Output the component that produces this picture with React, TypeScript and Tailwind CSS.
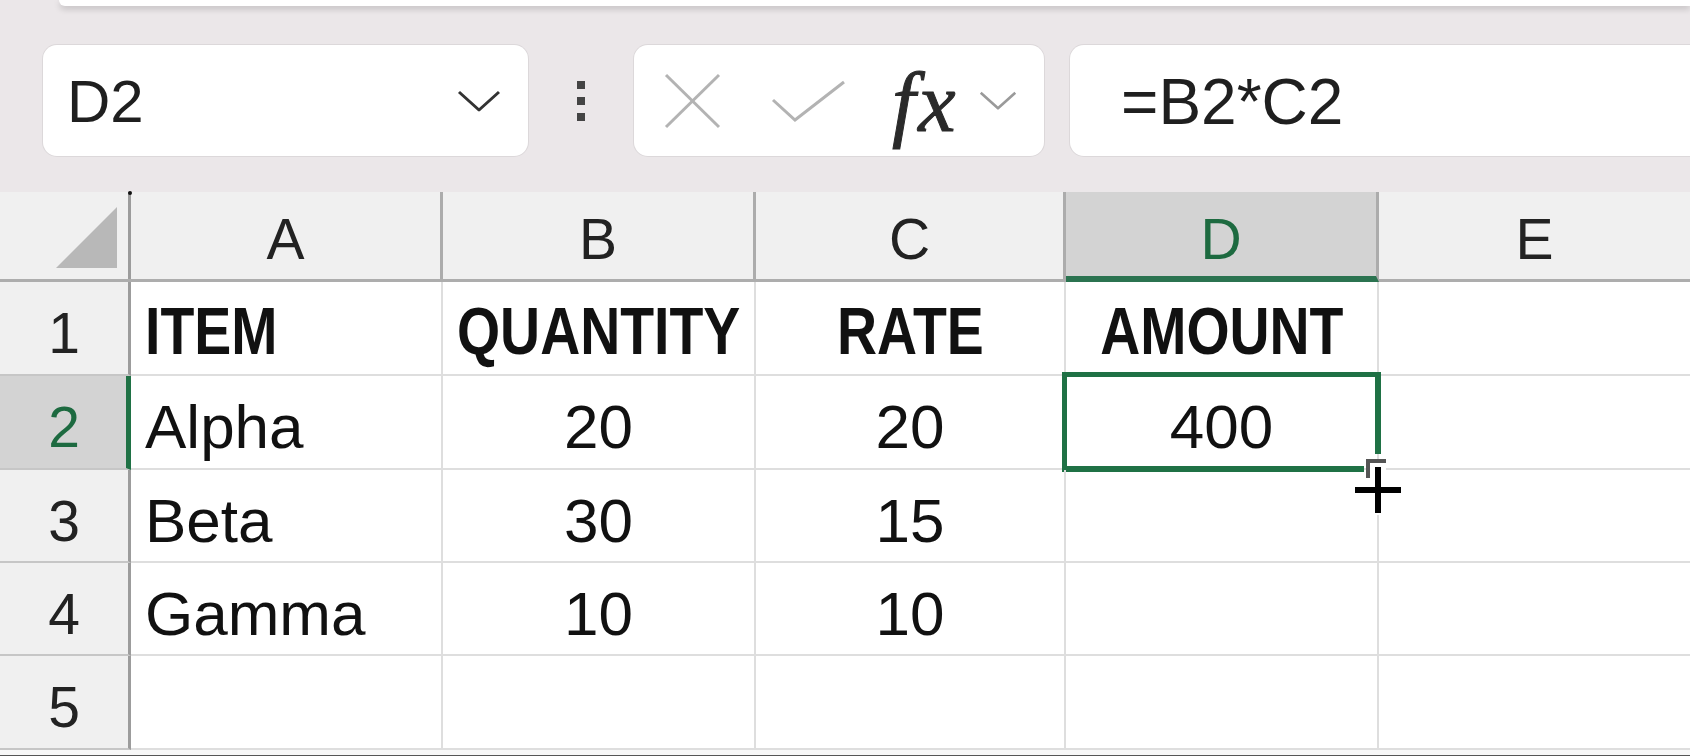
import React from "react";

const cols = [
  { key: "A", w: "w-[312px]" },
  { key: "B", w: "w-[313px]" },
  { key: "C", w: "w-[310px]" },
  { key: "D", w: "w-[313px]" },
  { key: "E", w: "flex-1" },
];

const rowHeights = ["h-[94px]", "h-[94px]", "h-[93px]", "h-[93px]", "h-[94px]"];

type Cell = { text?: string; bold?: boolean; align?: "left" | "center" };

const data: Cell[][] = [
  [
    { text: "ITEM", bold: true, align: "left" },
    { text: "QUANTITY", bold: true },
    { text: "RATE", bold: true },
    { text: "AMOUNT", bold: true },
    {},
  ],
  [{ text: "Alpha", align: "left" }, { text: "20" }, { text: "20" }, { text: "400" }, {}],
  [{ text: "Beta", align: "left" }, { text: "30" }, { text: "15" }, {}, {}],
  [{ text: "Gamma", align: "left" }, { text: "10" }, { text: "10" }, {}, {}],
  [{}, {}, {}, {}, {}],
];

function Chevron({ className, color = "#333" }: { className: string; color?: string }) {
  return (
    <svg className={className} viewBox="0 0 44 22" fill="none">
      <polyline points="2,2 22,20 42,2" stroke={color} strokeWidth="3" strokeLinejoin="round" />
    </svg>
  );
}

function Toolbar() {
  return (
    <div className="flex items-start pt-[39px] h-[186px]">
      {/* Name box */}
      <div className="ml-[43px] w-[485px] h-[111px] bg-white rounded-[14px] shadow-[0_0_0_1px_#dcd8da] flex items-center pl-[24px] pr-[27px]">
        <span className="text-[60px] leading-none text-[#1f1f1f] pt-[2px]">D2</span>
        <Chevron className="ml-auto w-[44px] h-[22px]" />
      </div>

      {/* Drag dots */}
      <div className="w-[106px] h-[111px] flex flex-col items-center justify-center gap-[8px]">
        <span className="block w-[8px] h-[8px] bg-[#444]" />
        <span className="block w-[8px] h-[8px] bg-[#444]" />
        <span className="block w-[8px] h-[8px] bg-[#444]" />
      </div>

      {/* Cancel / enter / fx */}
      <div className="w-[410px] h-[111px] bg-white rounded-[14px] shadow-[0_0_0_1px_#dcd8da] flex items-center pl-[29px]">
        <svg className="w-[59px] h-[56px]" viewBox="0 0 59 56" fill="none">
          <line x1="3" y1="2" x2="56" y2="54" stroke="#b3b3b3" strokeWidth="3" />
          <line x1="56" y1="2" x2="3" y2="54" stroke="#b3b3b3" strokeWidth="3" />
        </svg>
        <svg className="ml-[49px] w-[75px] h-[42px]" viewBox="0 0 75 42" fill="none">
          <polyline points="2,20 24,40 73,2" stroke="#b3b3b3" strokeWidth="3" />
        </svg>
        <span className="ml-[46px] font-['Liberation_Serif'] italic text-[84px] leading-none text-[#2a2a2a] tracking-[3px] pt-[4px] [-webkit-text-stroke:1px_#2a2a2a]">
          fx
        </span>
        <Chevron className="ml-[18px] w-[42px] h-[19px]" color="#9a9a9a" />
      </div>

      {/* Formula bar */}
      <div className="ml-[26px] flex-1 h-[111px] bg-white rounded-l-[14px] shadow-[0_0_0_1px_#dcd8da] flex items-center pl-[51px]">
        <span className="text-[64px] leading-none text-[#1f1f1f] pt-[2px]">=B2*C2</span>
      </div>
    </div>
  );
}

function Grid() {
  return (
    <div className="bg-white">
      {/* Column header row */}
      <div className="flex h-[90px] bg-[#f0f0f0] border-b-[3px] border-[#adadad]">
        <div className="relative w-[131px] shrink-0 border-r-[3px] border-[#9c9c9c]">
          <svg className="absolute left-[56px] top-[15px] w-[61px] h-[61px]" viewBox="0 0 61 61">
            <polygon points="61,0 61,61 0,61" fill="#b8b8b8" />
          </svg>
          <span className="absolute -right-[4px] -top-[1px] w-[4px] h-[4px] rounded-full bg-[#111]" />
        </div>
        {cols.map((c) => {
          const sel = c.key === "D";
          return (
            <div
              key={c.key}
              className={`${c.w} shrink-0 text-center text-[57px] pt-[10px] leading-[74px] ${
                sel
                  ? "bg-[#d3d3d3] text-[#1d6a40] border-b-[6px] border-[#2b7350] -mb-[3px]"
                  : "text-[#222]"
              } ${c.key !== "E" ? "border-r-[3px] border-r-[#acacac]" : ""}`}
            >
              {c.key}
            </div>
          );
        })}
      </div>

      {data.map((row, ri) => {
        const selRow = ri === 1;
        return (
          <div key={ri} className={`flex ${rowHeights[ri]} border-b-2 border-[#dedede]`}>
            <div
              className={`w-[131px] shrink-0 text-center text-[57px] pt-[14px] leading-[74px] -mb-[2px] border-b-2 border-[#c6c6c6] ${
                selRow
                  ? "bg-[#d3d3d3] text-[#1d6a40] border-r-[5px] border-r-[#1f7145] pl-[2px]"
                  : "bg-[#f0f0f0] text-[#222] border-r-[3px] border-r-[#9c9c9c]"
              }`}
            >
              {ri + 1}
            </div>
            {row.map((cell, ci) => {
              const c = cols[ci];
              const selected = ri === 1 && ci === 3;
              const left = cell.align === "left";
              return (
                <div
                  key={ci}
                  className={`relative flex ${c.w} shrink-0 text-[#111] ${
                    ci < 4 ? "border-r-2 border-[#dedede]" : ""
                  } ${left ? "justify-start pl-[14px]" : "justify-center"} ${
                    cell.bold
                      ? "font-bold text-[66px] pt-[7px] leading-[85px]"
                      : "text-[62px] pt-[8px] leading-[85px]"
                  }`}
                >
                  {cell.bold ? (
                    <span
                      className={`inline-block shrink-0 whitespace-nowrap scale-x-[0.84] ${
                        left ? "origin-left" : "origin-center"
                      }`}
                    >
                      {cell.text}
                    </span>
                  ) : (
                    <span>{cell.text}</span>
                  )}
                  {selected && (
                    <>
                      <span className="absolute -left-[4px] -top-[4px] w-[319px] h-[5px] bg-[#1f7145]" />
                      <span className="absolute -left-[4px] -top-[4px] w-[5px] h-[100px] bg-[#1f7145]" />
                      <span className="absolute -left-[4px] top-[90px] w-[302px] h-[6px] bg-[#1f7145]" />
                      <span className="absolute left-[309px] -top-[4px] w-[6px] h-[82px] bg-[#1f7145]" />
                      <span className="absolute left-[300px] top-[83px] w-[20px] h-[19px] border-l-[4px] border-t-[4px] border-[#555] bg-white" />
                    </>
                  )}
                </div>
              );
            })}
          </div>
        );
      })}
      <div className="h-[9px] bg-[#f7f7f7] border-b-[4px] border-[#555]" />
    </div>
  );
}

export default function App() {
  return (
    <div className="relative w-[1690px] h-[756px] overflow-hidden bg-[#ebe7e9] font-['Liberation_Sans',sans-serif]">
      <div className="h-[6px] ml-[59px] bg-white rounded-bl-[12px] shadow-[0_3px_6px_rgba(0,0,0,0.18)]" />
      <Toolbar />
      <Grid />
      {/* Cell cursor */}
      <svg className="absolute left-[1351px] top-[463px] w-[54px] h-[54px]" viewBox="0 0 54 54">
        <path
          d="M23 3h8v20h20v8H31v20h-8V31H3v-8h20z"
          fill="#000"
          stroke="#fff"
          strokeWidth="2"
          strokeLinejoin="miter"
        />
      </svg>
    </div>
  );
}
